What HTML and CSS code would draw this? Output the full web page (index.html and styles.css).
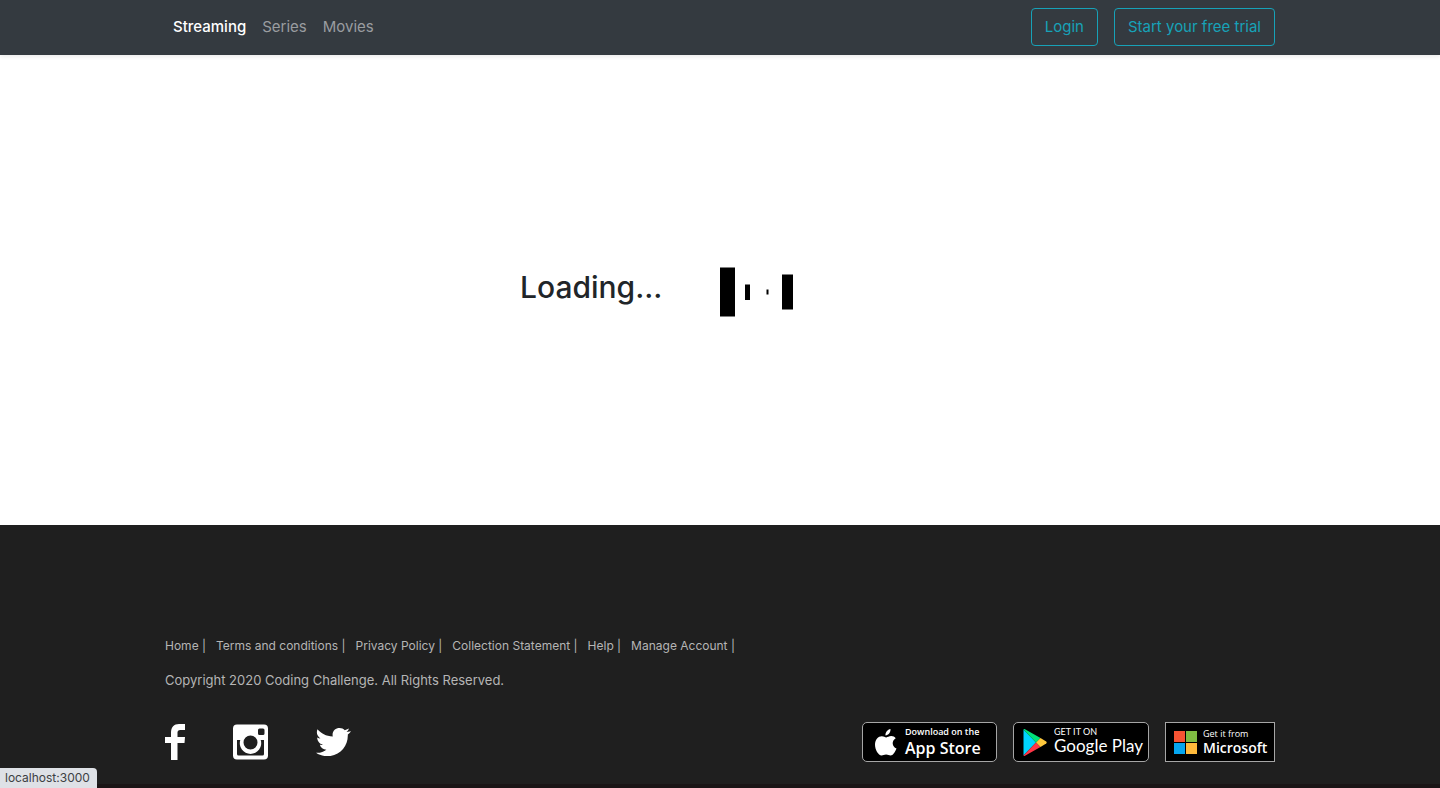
FILE: index.html
```html
<!DOCTYPE html>
<html lang="en">
<head>
<meta charset="utf-8">
<meta name="viewport" content="width=device-width, initial-scale=1">
<title>Streaming</title>
<link rel="stylesheet" href="styles.css">
</head>
<body>
<header class="navbar">
  <div class="container navbar-inner">
    <nav class="nav-links">
      <a class="nav-link active" href="#">Streaming</a>
      <a class="nav-link" href="#">Series</a>
      <a class="nav-link" href="#">Movies</a>
    </nav>
    <div class="nav-actions">
      <button class="btn" type="button">Login</button>
      <button class="btn" type="button">Start your free trial</button>
    </div>
  </div>
</header>
<main class="content">
  <div class="loading">
    <h2 class="loading-title">Loading...</h2>
    <svg class="loading-bars" width="80" height="64" viewBox="0 0 80 64" aria-hidden="true">
      <path d="M0 7.500h15v49H0zM25 24.500h5v15.500h-5zM46.500 29.500h2v5h-2zM62 14.500h11v35H62z"/>
    </svg>
  </div>
</main>
<footer class="footer">
  <div class="container">
    <nav class="footer-links">
      <span><a href="#">Home</a> |</span>
      <span><a href="#">Terms and conditions</a> |</span>
      <span><a href="#">Privacy Policy</a> |</span>
      <span><a href="#">Collection Statement</a> |</span>
      <span><a href="#">Help</a> |</span>
      <span><a href="#">Manage Account</a> |</span>
    </nav>
    <p class="copyright">Copyright 2020 Coding Challenge. All Rights Reserved.</p>
    <div class="footer-bottom">
      <div class="social">
        <a href="#" aria-label="Facebook"><svg width="20" height="36" viewBox="0 0 20 36"><path d="M6 36V19H0v-6h6V9C6 3 9 0 14 0h6v6h-4c-3 0-3.500 1-3.500 3.500V13H20l-.5 6h-7v17z"/></svg></a>
        <a href="#" aria-label="Instagram"><svg width="35" height="36" viewBox="0 0 35 36"><path fill-rule="evenodd" d="M4 .5h27q4 0 4 4v27q0 4-4 4H4q-4 0-4-4v-27q0-4 4-4zM26.500 4.500q-1.500 0-1.500 1.500v3.500q0 1.500 1.500 1.500H30q1.500 0 1.500-1.500V6q0-1.500-1.500-1.500zM4 16v14q0 1.500 1.500 1.500h24q1.500 0 1.500-1.500V16h-3.300a10.700 10.700 0 1 1-20.400 0zM17.500 11.500a7 7 0 1 0 0 14 7 7 0 0 0 0-14z"/></svg></a>
        <a href="#" aria-label="Twitter"><svg width="35" height="28" viewBox="0 0 35 28"><path d="M1.500 1.300C5 5.500 10 8.300 16.800 8.600 15.600 3.500 19.300 0 23.500 0c2.200 0 4 .8 5.300 2.200L33 .6c-.5 1.500-1.400 2.600-2.500 3.500L35 3.300c-.8 1.300-1.900 2.300-3.200 3.300C32.300 18 24 28.200 11.500 28.200 7.200 28.200 3.300 27 0 24.800c4 .3 7.500-.6 10.400-3-3.300-.2-5.700-2.200-6.600-5 1.100.2 2 .2 3.100-.1-3.500-.8-5.700-3.700-5.700-7.200 1 .6 2 .8 3.200.9C1 8 .1 4.500 1.500 1.300z"/></svg></a>
      </div>
      <div class="stores">
        <a class="badge badge-apple" href="#">
          <svg width="22" height="27" viewBox="0 0 22 27"><path fill="#fff" d="M15.500 0c.2 3.500-2 6.300-5 6.400C10.200 3.300 12.500.5 15.500 0zM20.700 9.300c-4.500 2.800-3.600 8.600.8 10.300-1.300 3.600-3.600 7-5.900 7-1.600 0-2.500-1-4.500-1s-3 1-4.500 1C3.300 26.600 0 20.500 0 15.800 0 10.500 3.300 7.200 6.800 7.200c1.900 0 3.300 1.200 4.500 1.200 1.100 0 2.700-1.300 5-1.300 1.700 0 3.400.8 4.400 2.200z"/></svg>
          <span class="badge-text"><span class="badge-small">Download on the</span><span class="badge-large">App Store</span></span>
        </a>
        <a class="badge badge-google" href="#">
          <svg width="24" height="27" viewBox="0 0 24 27"><path fill="#00d4ff" d="M.5.500 13 13.500.5 26.500z"/><path fill="#00e27a" d="M.5.500Q1-.4 2 .2L17.500 9 13 13.500z"/><path fill="#ff3547" d="M.5 26.500Q1 27.400 2 26.800L17.500 18 13 13.500z"/><path fill="#ffc83d" d="M17.500 9l5.700 3.500q1 1 0 2L17.500 18 13 13.500z"/></svg>
          <span class="badge-text"><span class="badge-small">GET IT ON</span><span class="badge-large">Google Play</span></span>
        </a>
        <a class="badge badge-microsoft" href="#">
          <svg width="23" height="23" viewBox="0 0 23 23"><path fill="#f65333" d="M0 0h11v11H0z"/><path fill="#7fbb42" d="M12 0h11v11H12z"/><path fill="#05a6f0" d="M0 12h11v11H0z"/><path fill="#ffba3b" d="M12 12h11v11H12z"/></svg>
          <span class="badge-text"><span class="badge-small">Get it from</span><span class="badge-large">Microsoft</span></span>
        </a>
      </div>
    </div>
  </div>
</footer>
<div class="status">localhost:3000</div>
</body>
</html>
```
FILE: styles.css
```css
* { box-sizing: border-box; }
body {
  margin: 0;
  min-height: 100vh;
  display: flex;
  flex-direction: column;
  background: #fff;
  color: #212529;
  font: 15px/24px Inter, "Liberation Sans", sans-serif;
}
a { color: inherit; text-decoration: none; }
svg { display: block; flex: none; }
.container { width: 100%; max-width: 1110px; margin: 0 auto; }
.navbar {
  background: #343a40;
  box-shadow: 0 2px 4px rgba(0, 0, 0, .08);
  padding: 8px 0 9px;
}
.navbar-inner { display: flex; justify-content: space-between; align-items: center; }
.nav-links { display: flex; }
.nav-link { padding: 0 8px; color: #9a9da0; }
.nav-link.active { color: #fff; font-weight: 500; }
.nav-actions { display: flex; gap: 16px; }
.btn {
  padding: 6px 13px;
  border: 1px solid #17a2b8;
  border-radius: 4px;
  background: transparent;
  color: #17a2b8;
  font: inherit;
}
.content { flex: 1; display: flex; justify-content: center; padding-top: 205px; }
.loading { display: grid; grid-template-columns: 200px 200px; }
.loading-title { margin: 8px 0 0; font-size: 30px; line-height: 38px; font-weight: 500; }
.footer {
  background: #1f1f1f;
  border-bottom: 4px solid #1a1516;
  padding: 112px 0 22px;
  color: #b5b5b5;
}
.footer-links { display: flex; gap: 10px; font-size: 12px; line-height: 18px; }
.copyright { margin: 15px 0 32px; font-size: 13px; line-height: 20px; }
.footer-bottom { display: flex; justify-content: space-between; align-items: center; }
.social { display: flex; align-items: center; gap: 48px; fill: #fff; }
.stores { display: flex; gap: 16px; }
.badge {
  display: flex;
  align-items: center;
  height: 40px;
  border: 1px solid #a6a6a6;
  border-radius: 5px;
  background: #000;
  color: #fff;
  white-space: nowrap;
}
.badge-text { display: flex; flex-direction: column; }
.badge-apple { width: 135px; padding-left: 12px; gap: 8px; font-family: "Open Sans", sans-serif; font-weight: 600; }
.badge-google { width: 136px; padding-left: 9px; gap: 7px; font-family: Lato, sans-serif; }
.badge-microsoft { width: 110px; padding-left: 8px; gap: 6px; border-radius: 0; font-family: "Open Sans", sans-serif; }
.badge-small { font-size: 9px; line-height: 12px; }
.badge-large { font-size: 17px; line-height: 20px; }
.badge-apple .badge-large { font-size: 16px; }
.badge-google .badge-large { line-height: 18px; padding-bottom: 4px; }
.badge-google .badge-small { line-height: 11px; }
.badge-microsoft .badge-large { font-size: 14px; line-height: 16px; font-weight: 600; }
.status {
  position: fixed;
  left: 0;
  bottom: 0;
  padding: 1px 7px 1px 5px;
  border-radius: 0 4px 0 0;
  background: #dee1e6;
  color: #3c4043;
  font-size: 12px;
  line-height: 18px;
}
```
